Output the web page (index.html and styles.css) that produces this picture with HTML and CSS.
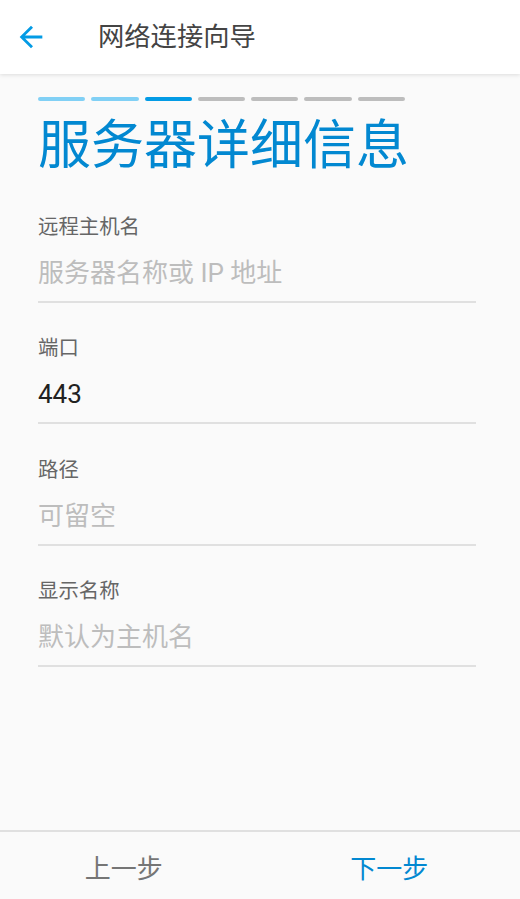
FILE: index.html
```html
<!DOCTYPE html>
<html lang="zh-CN">
<head>
<meta charset="utf-8">
<title>网络连接向导</title>
<link rel="stylesheet" href="styles.css">
</head>
<body>
<div class="app">
  <header class="topbar">
    <button class="back" aria-label="返回">
      <svg viewBox="0 0 24 24" width="34" height="34"><path d="M20 11H7.83l5.59-5.59L12 4l-8 8 8 8 1.41-1.41L7.83 13H20v-2z" fill="#039BE5"/></svg>
    </button>
    <h1 class="topbar-title">网络连接向导</h1>
  </header>
  <main class="content">
    <div class="steps">
      <span class="step done"></span>
      <span class="step done"></span>
      <span class="step active"></span>
      <span class="step"></span>
      <span class="step"></span>
      <span class="step"></span>
      <span class="step"></span>
    </div>
    <h2 class="page-title">服务器详细信息</h2>
    <div class="field">
      <div class="label">远程主机名</div>
      <div class="input placeholder">服务器名称或 IP 地址</div>
    </div>
    <div class="field">
      <div class="label">端口</div>
      <div class="input">443</div>
    </div>
    <div class="field">
      <div class="label">路径</div>
      <div class="input placeholder">可留空</div>
    </div>
    <div class="field">
      <div class="label">显示名称</div>
      <div class="input placeholder">默认为主机名</div>
    </div>
  </main>
  <footer class="bottombar">
    <button class="nav prev">上一步</button>
    <button class="nav next">下一步</button>
  </footer>
</div>
</body>
</html>
```
FILE: styles.css
```css
html, body {
  margin: 0;
  padding: 0;
  background: #fafafa;
  font-family: "Roboto", "Noto Sans CJK SC", sans-serif;
}
.app {
  height: 100vh;
  display: flex;
  flex-direction: column;
}
.topbar {
  height: 74px;
  flex: none;
  background: #ffffff;
  box-shadow: 0 1px 4px rgba(0,0,0,0.12);
  display: flex;
  align-items: center;
  position: relative;
  z-index: 1;
}
.back {
  border: 0;
  background: none;
  padding: 0;
  margin: 0 0 0 14px;
  width: 34px;
  height: 34px;
  display: flex;
}
.topbar-title {
  margin: 0 0 0 50px;
  font-size: 26.3px;
  font-weight: 400;
  color: #444444;
  line-height: 34px;
}
.content {
  flex: 1;
  padding: 23px 44px 0 38px;
}
.steps {
  display: flex;
  gap: 6px;
}
.step {
  width: 47.3px;
  height: 4px;
  border-radius: 2px;
  background: #bdbdbd;
}
.step.done { background: #81d0f5; }
.step.active { background: #039be5; }
.page-title {
  margin: 15px 0 0 0;
  font-size: 53px;
  line-height: 60px;
  font-weight: 400;
  color: #0288d1;
}
.field {
  margin-top: 31.3px;
  border-bottom: 2px solid #e0e0e0;
  padding-bottom: 10px;
}
.page-title + .field { margin-top: 37px; }
.label {
  font-size: 20.4px;
  line-height: 28px;
  color: #666666;
}
.input {
  margin-top: 14px;
  font-size: 26px;
  line-height: 36px;
  color: #212121;
}
.input.placeholder { color: #bdbdbd; }
.bottombar {
  flex: none;
  height: 67px;
  border-top: 2px solid #e0e0e0;
  display: flex;
}
.nav {
  flex: 1;
  border: 0;
  background: none;
  font-family: inherit;
  font-size: 26px;
  padding: 2px 0 0 0;
  margin: 0;
}
.prev { color: #757575; padding-right: 18px; }
.next { color: #0288d1; padding-right: 7px; }
```
